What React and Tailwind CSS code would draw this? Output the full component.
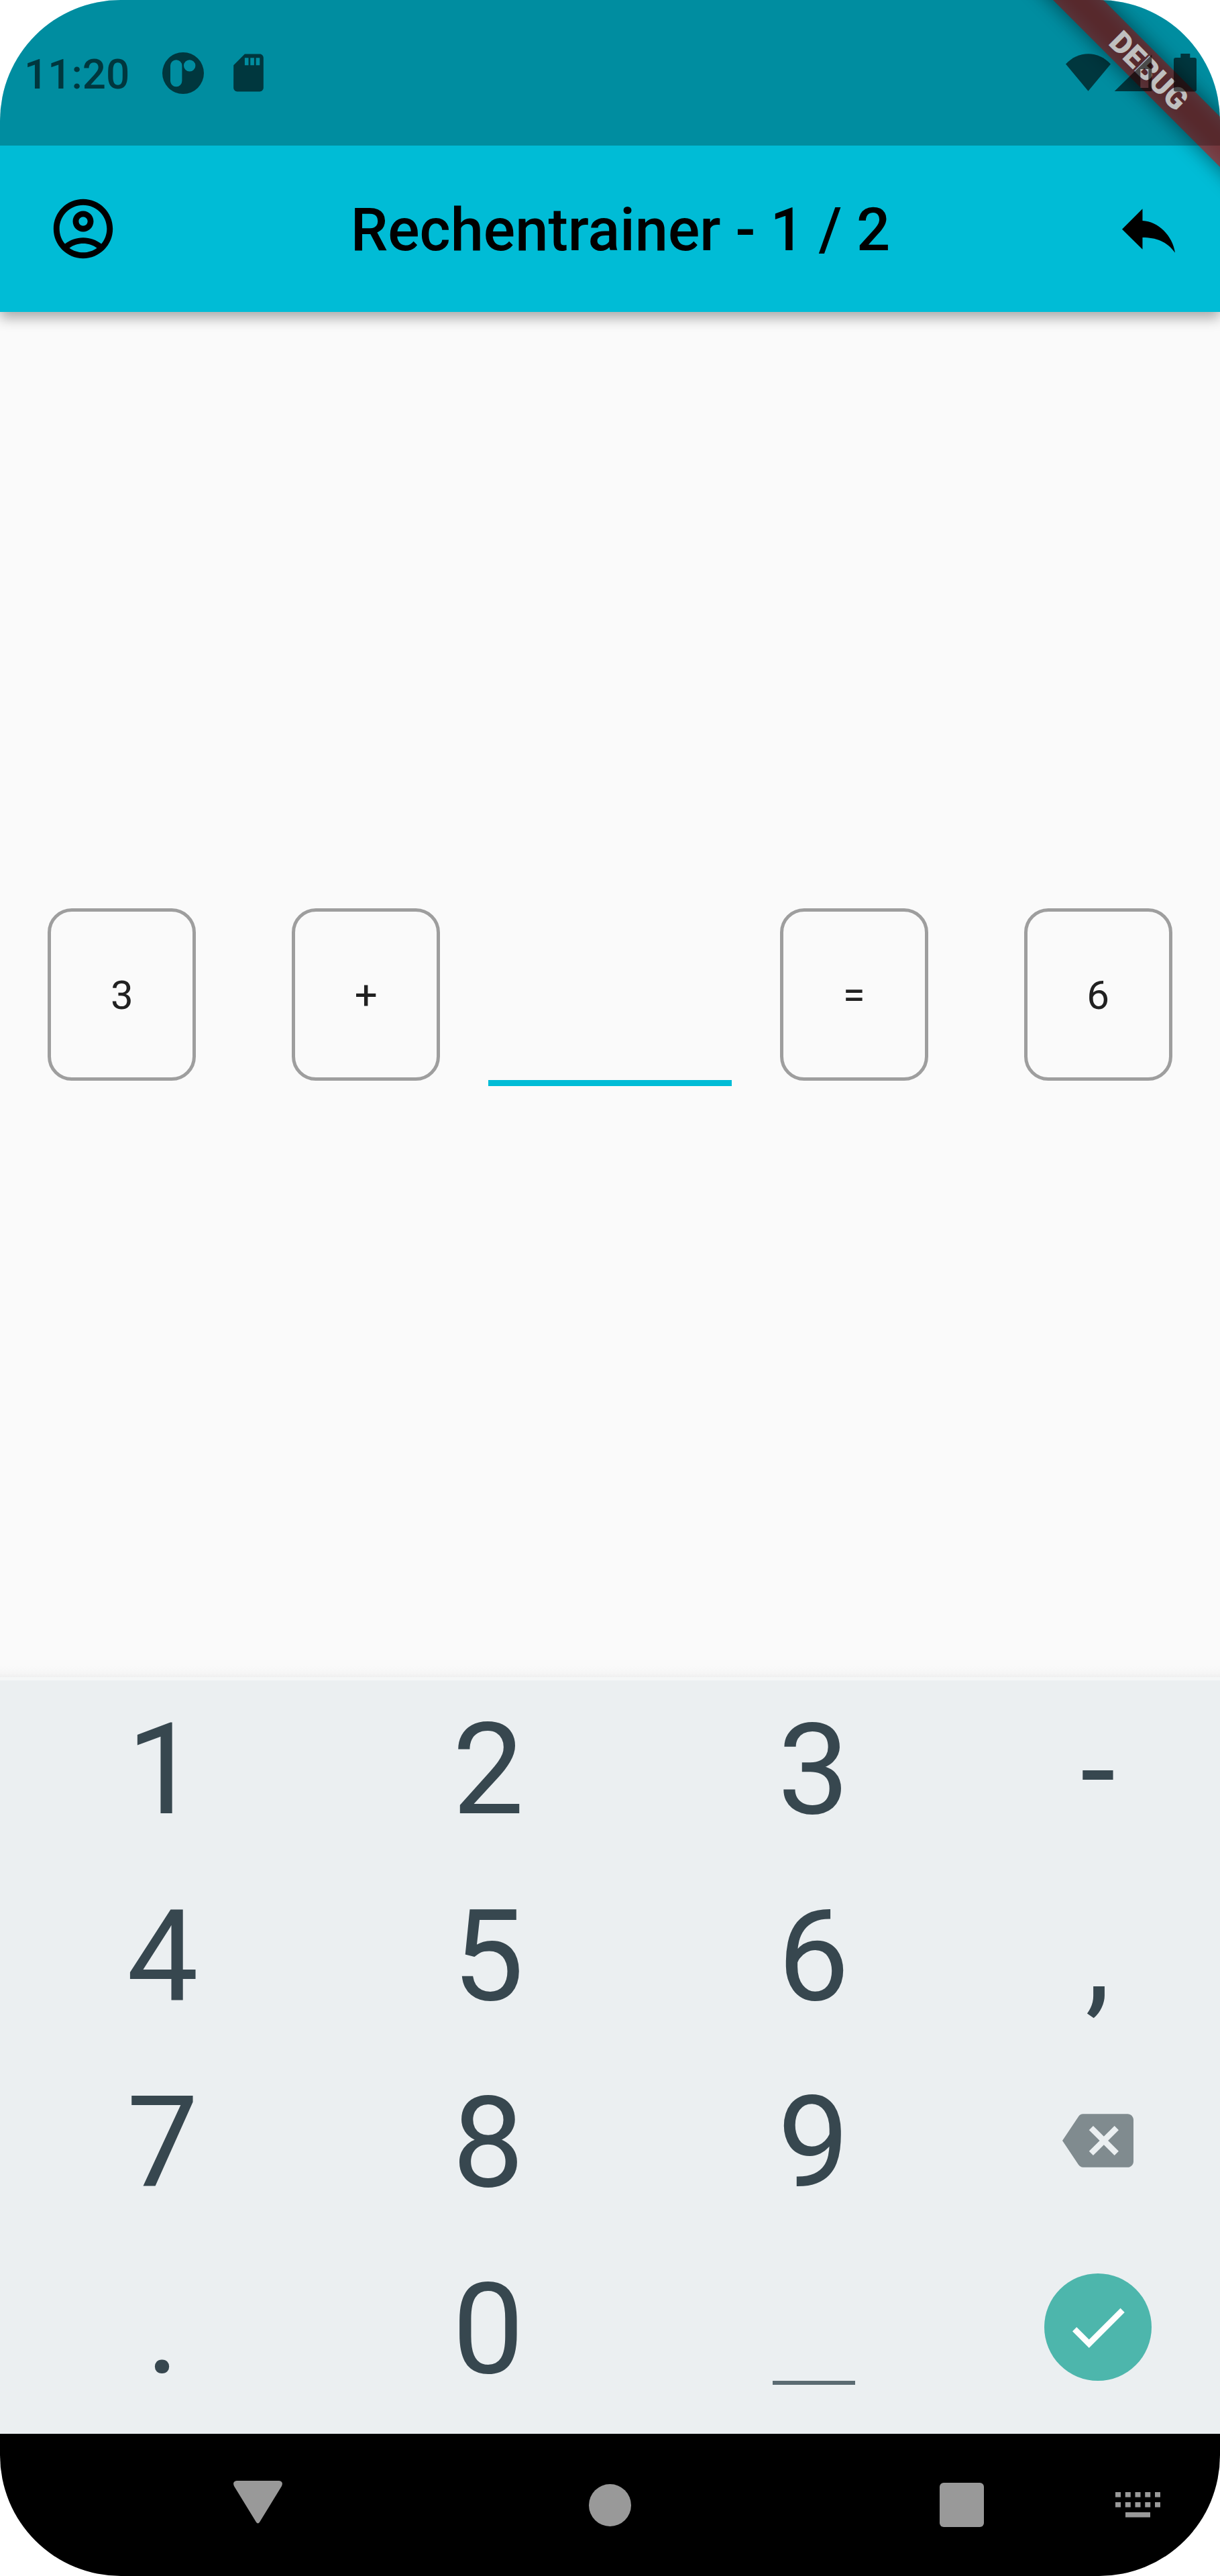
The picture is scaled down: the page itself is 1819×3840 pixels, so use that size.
const keyCls = "flex items-center justify-center pt-[5px] text-[190px] leading-none text-[#37474f]";

function StatusBar() {
  return (
    <div className="relative flex h-[217px] items-start bg-black/25 pl-[36px] text-black/[0.61]">
      <span className="mt-[75px] text-[62px] font-medium leading-[72px]">11:20</span>
      <svg className="ml-[49px] mt-[78px] h-[62px] w-[62px]" viewBox="0 0 62 62" fill="currentColor">
        <path fillRule="evenodd" d="M31 0a31 31 0 1 1 0 62a31 31 0 1 1 0-62zM12 20V42.500a8.700 8.700 0 0 0 17.400 0V20a8.700 8.700 0 0 0-17.400 0zM40.700 11.200a8.700 8.700 0 1 0 0 17.400a8.700 8.700 0 1 0 0-17.400z" />
      </svg>
      <svg className="ml-[33px] mt-[75px] h-[67px] w-[67px]" viewBox="0 0 24 24" fill="currentColor">
        <path d="M18 2h-8L4.020 8 4 20c0 1.100.9 2 2 2h12c1.100 0 2-.9 2-2V4c0-1.100-.9-2-2-2zm-6 6h-2V4h2v4zm3 0h-2V4h2v4zm3 0h-2V4h2v4z" />
      </svg>
      <svg className="ml-auto mt-[80px] h-[56px] w-[67px]" viewBox="0 0 201 167" fill="currentColor">
        <path d="M100.500 167L0 46C28 16 62 0 100.500 0S173 16 201 46Z" />
      </svg>
      <svg className="ml-[5px] mt-[81px] h-[56px] w-[57px]" viewBox="0 0 57 56" fill="currentColor">
        <path fillRule="evenodd" d="M0.700 55L56.300 0.500V55ZM39.300 22V50H51.300V22Z" />
      </svg>
      <svg className="ml-[32px] mr-[35px] mt-[80px] h-[57px] w-[34px]" viewBox="0 0 34 57" fill="currentColor">
        <path d="M10.300 0H24.300V6H31Q34 6 34 9V53.500Q34 56.500 31 56.500H3Q0 56.500 0 53.500V9Q0 6 3 6H10.300Z" />
      </svg>
    </div>
  );
}

function DebugBanner() {
  return (
    <div className="absolute left-[1413px] top-[79px] h-[53px] w-[600px] rotate-45">
      <div className="absolute inset-0 bg-black/50 blur-[15px]" />
      <div className="relative flex h-full items-center justify-center bg-[#b71c1c]/[0.63]">
        <span className="text-[45px] font-black leading-none text-white">DEBUG</span>
      </div>
    </div>
  );
}

function Header() {
  return (
    <header className="flex h-[248px] items-center justify-between pl-[71px] pr-[67px]">
      <svg className="h-[106px] w-[106px]" viewBox="0 0 24 24">
        <path d="M12 2C6.480 2 2 6.480 2 12s4.480 10 10 10 10-4.480 10-10S17.520 2 12 2zM7.350 18.500C8.660 17.560 10.260 17 12 17s3.340.56 4.650 1.500c-1.310.94-2.910 1.500-4.650 1.500s-3.340-.56-4.650-1.500zm10.790-1.380C16.450 15.800 14.320 15 12 15s-4.450.8-6.140 2.120C4.700 15.730 4 13.950 4 12c0-4.420 3.580-8 8-8s8 3.580 8 8c0 1.950-.7 3.730-1.860 5.120z" />
        <path d="M12 6c-1.930 0-3.500 1.570-3.500 3.500S10.070 13 12 13s3.500-1.570 3.500-3.500S13.930 6 12 6zm0 5c-.83 0-1.500-.67-1.500-1.500S11.170 8 12 8s1.500.67 1.500 1.500S12.830 11 12 11z" />
      </svg>
      <h1 className="pt-[4px] text-[88.4px] font-medium leading-none text-black">Rechentrainer - 1 / 2</h1>
      <svg className="mt-[5px] h-[66px] w-[79px]" viewBox="0 0 236 196">
        <path d="M91 0L0 91L91 181V128C150 128 200 145 236 196C225 118 160 56 91 53Z" />
      </svg>
    </header>
  );
}

function Card({ children }) {
  return (
    <div className="flex flex-1 justify-center">
      <div className="flex h-[257px] w-[221px] items-center justify-center rounded-[36px] border-[5px] border-[#9e9e9e] pt-[3px] text-[60px] leading-none text-[#212121]">
        {children}
      </div>
    </div>
  );
}

function NavBar() {
  return (
    <nav className="flex h-[212px] items-center bg-black text-[#999]">
      <svg className="mb-[9px] ml-[348px] h-[64px] w-[73px]" viewBox="0 0 73 64" fill="currentColor">
        <path d="M5 0H68Q75 1 72 8L39.500 61Q36.500 66 33.500 61L1 8Q-2 1 5 0Z" />
      </svg>
      <div className="ml-[457px] h-[63px] w-[63px] rounded-full bg-[#999]" />
      <div className="ml-[460px] h-[66px] w-[66px] rounded-[6px] bg-[#999]" />
      <svg className="ml-[196px] h-[38px] w-[68px]" viewBox="0 0 68 38" fill="currentColor">
        {[0, 15].map((y) =>
          [0, 14.750, 29.500, 44.250, 59].map((x) => <rect key={x + "-" + y} x={x} y={y} width="8" height="7.500" />)
        )}
        <rect x="15" y="30" width="37" height="7.500" />
      </svg>
    </nav>
  );
}

export default function App() {
  return (
    <div className="h-[3840px] w-[1819px] bg-white font-[Roboto,sans-serif]">
      <div className="relative flex h-full w-full flex-col overflow-hidden rounded-[180px] bg-[#fafafa]">
        <div className="z-10 bg-[#00bcd6] shadow-[0_9px_18px_rgba(0,0,0,0.32)]">
          <DebugBanner />
          <StatusBar />
          <Header />
        </div>
        <main className="flex flex-1 items-start bg-[linear-gradient(to_top,#f5f5f5_0px,#fafafa_12px)] pt-[889px]">
          <Card>3</Card>
          <Card>+</Card>
          <div className="mt-[256px] h-[9px] flex-1 bg-[#00bcd6]" />
          <Card>=</Card>
          <Card>6</Card>
        </main>
        <section className="grid h-[1132px] grid-cols-[485px_486px_484px_364px] grid-rows-[repeat(4,278px)] bg-[linear-gradient(to_bottom,#f3f3f3_0px,#f0f0f0_4px,#f5f7f7_4px,#f5f7f7_9px,#ebeff1_9px)]">
          <button className={keyCls}>1</button>
          <button className={keyCls}>2</button>
          <button className={keyCls}>3</button>
          <button className={keyCls}>-</button>
          <button className={keyCls}>4</button>
          <button className={keyCls}>5</button>
          <button className={keyCls}>6</button>
          <button className={keyCls}>,</button>
          <button className={keyCls}>7</button>
          <button className={keyCls}>8</button>
          <button className={keyCls}>9</button>
          <button className="flex items-center justify-center">
            <svg className="h-[106px] w-[106px]" viewBox="0 0 24 24" fill="#808b8f">
              <path d="M22 3H7c-.69 0-1.230.35-1.590.88L0 12l5.410 8.110c.36.53.9.89 1.590.89h15c1.100 0 2-.9 2-2V5c0-1.100-.9-2-2-2zm-3 12.590L17.590 17 14 13.410 10.410 17 9 15.590 12.590 12 9 8.410 10.410 7 14 10.590 17.590 7 19 8.410 15.410 12 19 15.590z" />
            </svg>
          </button>
          <button className={keyCls}>.</button>
          <button className={keyCls}>0</button>
          <button className="flex items-end justify-center pb-[53px]">
            <span className="h-[6px] w-[123px] bg-[#5b6b72]" />
          </button>
          <button className="flex items-center justify-center">
            <span className="flex h-[160px] w-[160px] items-center justify-center rounded-full bg-[#4db6ac]">
              <svg className="h-[106px] w-[106px]" viewBox="0 0 24 24" fill="white">
                <path d="M9 16.200L4.800 12l-1.400 1.400L9 19 21 7l-1.400-1.400L9 16.200z" />
              </svg>
            </span>
          </button>
        </section>
        <NavBar />
      </div>
    </div>
  );
}
